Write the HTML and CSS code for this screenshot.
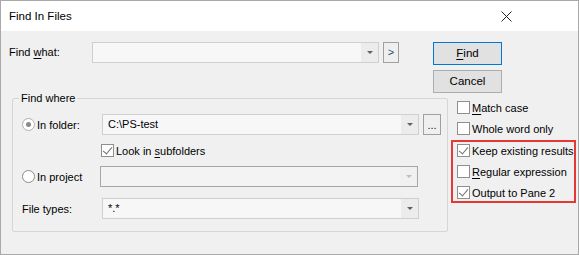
FILE: index.html
```html
<!DOCTYPE html>
<html lang="en">
<head>
  <meta charset="UTF-8">
  <title>Find In Files</title>
  <link rel="stylesheet" href="styles.css">
</head>
<body>
  <div class="window">
    <div class="titlebar">
      <span class="title">Find In Files</span>
      <svg class="close" width="11" height="11" viewBox="0 0 11 11">
        <path d="M0.5 0.5 L10.5 10.5 M10.5 0.5 L0.5 10.5" stroke="#222" stroke-width="1" fill="none" />
      </svg>
    </div>

    <div class="client">
      <!-- Find what + buttons -->
      <div class="top">
        <div class="find-row">
          <span class="find-label">Find <u>w</u>hat:</span>
          <div class="combo find-combo">
            <span class="combo-text"></span>
            <span class="combo-btn"><i class="arrow"></i></span>
          </div>
          <span class="mini-btn">&gt;</span>
        </div>
        <div class="actions">
          <span class="btn btn-default"><u>F</u>ind</span>
          <span class="btn">Cancel</span>
        </div>
      </div>

      <div class="bottom">
        <!-- Find where group -->
        <div class="group">
          <span class="group-title">Find where</span>

          <div class="group-row row-folder">
            <span class="radio-label"><i class="radio checked"></i><span>In folder:</span></span>
            <div class="combo wide-combo">
              <span class="combo-text">C:\PS-test</span>
              <span class="combo-btn"><i class="arrow"></i></span>
            </div>
            <span class="mini-btn dots">...</span>
          </div>

          <div class="group-row row-sub">
            <span class="check-label"><i class="check checked"></i><span>Look in <u>s</u>ubfolders</span></span>
          </div>

          <div class="group-row row-project">
            <span class="radio-label"><i class="radio"></i><span>In project</span></span>
            <div class="combo wide-combo disabled">
              <span class="combo-text"></span>
              <span class="combo-btn"><i class="arrow"></i></span>
            </div>
          </div>

          <div class="group-row row-types">
            <span class="plain-label">File types:</span>
            <div class="combo wide-combo">
              <span class="combo-text">*.*</span>
              <span class="combo-btn"><i class="arrow"></i></span>
            </div>
          </div>
        </div>

        <!-- Options -->
        <div class="options">
          <span class="option"><i class="check"></i><span><u>M</u>atch case</span></span>
          <span class="option"><i class="check"></i><span>Whole word only</span></span>
          <div class="highlight">
            <span class="option"><i class="check checked"></i><span>Keep existing results</span></span>
            <span class="option"><i class="check"></i><span><u>R</u>egular expression</span></span>
            <span class="option"><i class="check checked"></i><span>Output to Pane 2</span></span>
          </div>
        </div>
      </div>
    </div>
  </div>
</body>
</html>
```

FILE: styles.css
```css
* {
  box-sizing: border-box;
}
body {
  margin: 0;
  background: #fff;
  font-family: "Liberation Sans", Arial, sans-serif;
  font-size: 11px;
  color: #000;
}
u {
  text-decoration: underline;
  text-underline-offset: 2px;
}
.window {
  width: 579px;
  height: 255px;
  border: 1px solid #a9a9a9;
  display: flex;
  flex-direction: column;
  white-space: nowrap;
}
.titlebar {
  height: 30px;
  background: #fff;
  display: flex;
  align-items: center;
  justify-content: space-between;
  padding: 0 66px 0 8px;
}
.title {
  font-size: 11.5px;
}
.close {
  display: block;
}
.client {
  flex: 1;
  background: #f0f0f0;
}

/* top part */
.top {
  display: flex;
  padding: 11px 0 0 8px;
}
.find-row {
  display: flex;
  align-items: flex-start;
}
.find-label {
  width: 83px;
  line-height: 21px;
}
.combo {
  height: 21px;
  border: 1px solid #cfcfcf;
  background: #f7f7f8;
  display: flex;
  align-items: stretch;
}
.combo-text {
  flex: 1;
  padding-left: 5px;
  line-height: 19px;
}
.combo-btn {
  width: 17px;
  background: #ececed;
  display: flex;
  align-items: center;
  justify-content: center;
}
.arrow {
  width: 0;
  height: 0;
  border-left: 3px solid transparent;
  border-right: 3px solid transparent;
  border-top: 3px solid #606060;
}
.combo.disabled {
  border-color: #a6a6a6;
  background: #f3f3f4;
}
.combo.disabled .combo-btn {
  background: #f0f0f1;
}
.combo.disabled .arrow {
  border-top-color: #bdbdbd;
}
.find-combo {
  width: 287px;
}
.mini-btn {
  width: 16px;
  height: 21px;
  margin-left: 4px;
  border: 1px solid #a0a0a0;
  background: #efeff0;
  text-align: center;
  line-height: 18px;
  color: #1f4e79;
}
.mini-btn.dots {
  width: 18px;
  line-height: 21px;
  color: #222;
}
.actions {
  margin-left: 34px;
  display: flex;
  flex-direction: column;
  gap: 5px;
}
.btn {
  width: 69px;
  height: 23px;
  border: 1px solid #adadad;
  background: #e1e1e1;
  text-align: center;
  line-height: 21px;
  font-size: 11.5px;
}
.btn-default {
  border-color: #0078d7;
}

/* bottom part */
.bottom {
  display: flex;
  align-items: flex-start;
}
.group {
  margin: 5px 0 0 11px;
  width: 436px;
  height: 134px;
  border: 1px solid #d6d6d6;
  border-radius: 2px;
  padding-left: 9px;
}
.group-title {
  display: block;
  width: fit-content;
  margin: -8px 0 0 -3px;
  padding: 0 2px;
  background: #f0f0f0;
  line-height: 15px;
}
.group-row {
  display: flex;
  align-items: center;
  height: 21px;
}
.row-folder {
  margin-top: 8px;
}
.row-sub {
  margin-top: 5px;
  padding-left: 79px;
}
.row-project {
  margin-top: 5px;
}
.row-types {
  margin-top: 11px;
}
.radio-label,
.plain-label {
  width: 80px;
  display: flex;
  align-items: center;
}
.row-project .radio-label {
  width: 78px;
}
.wide-combo {
  width: 317px;
}
.row-project .wide-combo {
  width: 318px;
}
.radio {
  width: 13px;
  height: 13px;
  border: 1px solid #8c8c8c;
  border-radius: 50%;
  background: #fff;
  margin-right: 2px;
  display: flex;
  align-items: center;
  justify-content: center;
}
.radio.checked {
  border-color: #b0b0b0;
}
.radio.checked::after {
  content: "";
  width: 5px;
  height: 5px;
  border-radius: 50%;
  background: #8a8a8a;
}
.check-label,
.option {
  display: flex;
  align-items: center;
}
.check {
  width: 13px;
  height: 13px;
  border: 1px solid #8f8f8f;
  background: #fff;
  margin-right: 2px;
  position: relative;
  flex: none;
}
.check.checked::after {
  content: "";
  position: absolute;
  left: 3px;
  top: 0px;
  width: 4px;
  height: 8px;
  border: solid #6e6e6e;
  border-width: 0 1px 1px 0;
  transform: rotate(40deg);
}
.options {
  margin: 6px 0 0 3px;
  width: 125px;
  display: flex;
  flex-direction: column;
  gap: 4px;
}
.options > .option {
  height: 17px;
  padding-left: 6px;
}
.highlight {
  margin-top: -1px;
  border: 2px solid #e53935;
  padding: 0 0 0 4px;
  display: flex;
  flex-direction: column;
  gap: 4px;
}
.highlight .option {
  height: 17px;
}
```
